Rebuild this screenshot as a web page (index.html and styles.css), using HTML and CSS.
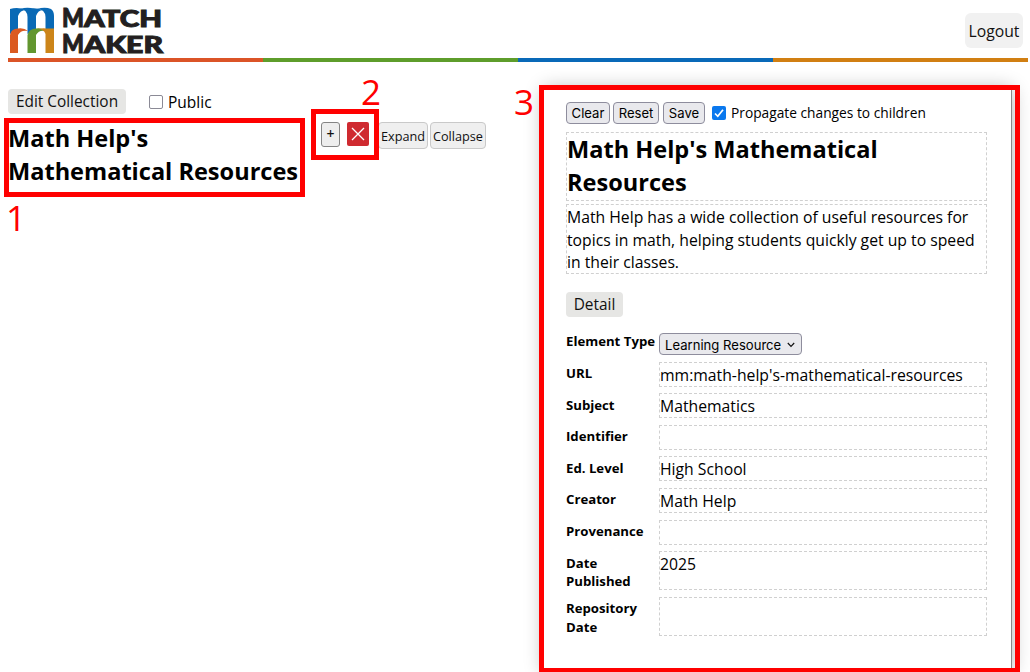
FILE: index.html
```html
<!DOCTYPE html>
<html lang="en">
<head>
<meta charset="utf-8">
<title>Match Maker</title>
<link rel="stylesheet" href="styles.css">
</head>
<body>
<header class="header">
  <div class="logo" role="img" aria-label="Match Maker">
    <svg width="54" height="50" viewBox="0 0 54 50">
      <g fill="#0969b5">
        <path d="M2 2Q10 -.5 18 3Q12 3 10 9V22L2 27Z"/>
        <path d="M12 2Q20 -.5 26 2Q28 4 28 9V22L19.500 27V10Q19 2 12 2Z"/>
        <path d="M20 2Q27 0 35 3Q30 3 28 9Q27 4 20 2Z"/>
        <path d="M29 2Q37 -.5 43 2Q46 4 46 9V22H37.500V10Q37 2 29 2Z"/>
      </g>
      <path fill="#db5a20" d="M2 46V28Q3 21.500 10 21.500Q16 20.500 20 24Q13 22.500 10 28V46Z"/>
      <path fill="#62962f" d="M19.500 46V28Q21 21.500 28 21.500Q34 20.500 37.500 24Q31 22.500 28 28V46Z"/>
      <path fill="#cc8519" d="M29 22Q35 21 38 21.500H46V46H37.500V27Q36 22 29 22Z"/>
    </svg>
    <svg class="logo-text" width="106" height="50" viewBox="0 0 106 50">
      <text class="logo-cap" x="0" y="20.300" textLength="22" lengthAdjust="spacingAndGlyphs">M</text>
      <text x="22" y="20.300" textLength="78" lengthAdjust="spacingAndGlyphs">ATCH</text>
      <text class="logo-cap" x="0" y="46" textLength="22" lengthAdjust="spacingAndGlyphs">M</text>
      <text x="22" y="46" textLength="79" lengthAdjust="spacingAndGlyphs">AKER</text>
    </svg>
  </div>
  <button class="logout">Logout</button>
</header>
<div class="rule"><i class="red"></i><i class="green"></i><i class="blue"></i><i class="ochre"></i></div>
<main class="main">
  <section class="tree">
    <div class="tree-bar">
      <button class="soft edit">Edit Collection</button>
      <span class="box"></span><span class="public">Public</span>
    </div>
    <div class="tree-row">
      <h1 class="title tree-title">Math Help's<br>Mathematical Resources</h1>
      <button class="plus">+</button>
      <button class="remove" aria-label="Remove"><svg width="14" height="14" viewBox="0 0 14 14"><path d="M1 1L13 13M13 1L1 13" stroke="#fff" stroke-width="1.300"/></svg></button>
      <button class="flat expand">Expand</button>
      <button class="flat collapse">Collapse</button>
    </div>
  </section>
  <section class="panel">
    <div class="panel-bar">
      <button class="native clear">Clear</button>
      <button class="native reset">Reset</button>
      <button class="native save">Save</button>
      <span class="box checked"><svg width="14" height="14" viewBox="0 0 14 14"><path d="M3 7.500L5.800 10.300L11 3.700" fill="none" stroke="#fff" stroke-width="1.700"/></svg></span>
      <span class="propagate">Propagate changes to children</span>
    </div>
    <h2 class="title field panel-title">Math Help's Mathematical<br>Resources</h2>
    <p class="field description">Math Help has a wide collection of useful resources for<br>topics in math, helping students quickly get up to speed<br>in their classes.</p>
    <button class="soft detail">Detail</button>
    <div class="form">
      <b>Element Type</b><div class="native select">Learning Resource<svg width="8" height="6" viewBox="0 0 8 6"><path d="M.8 1L4 4.300L7.200 1" fill="none" stroke="#111" stroke-width="1.200"/></svg></div>
      <b>URL</b><div class="field">mm:math-help's-mathematical-resources</div>
      <b>Subject</b><div class="field">Mathematics</div>
      <b>Identifier</b><div class="field"></div>
      <b>Ed. Level</b><div class="field">High School</div>
      <b>Creator</b><div class="field">Math Help</div>
      <b>Provenance</b><div class="field"></div>
      <b>Date<br>Published</b><div class="field">2025</div>
      <b>Repository<br>Date</b><div class="field"></div>
    </div>
  </section>
</main>
<div class="mark mark-1"></div><div class="num num-1">1</div>
<div class="mark mark-2"></div><div class="num num-2">2</div>
<div class="mark mark-3"></div><div class="num num-3">3</div>
</body>
</html>
```
FILE: styles.css
```css
* { box-sizing: border-box; }
body { margin: 0; width: 1030px; height: 672px; overflow: hidden; position: relative; background: #fff; color: #000; font: 15.740px/22.700px "Open Sans", "Noto Sans", sans-serif; }
button { font: inherit; color: #111; padding: 0; border: 0; margin: 0; white-space: nowrap; }
.header { display: flex; justify-content: space-between; height: 58px; padding: 7px 7px 0 8px; }
.logo { display: flex; }
.logo svg { display: block; overflow: visible; }
.logo-text { font: 900 22px Lato, sans-serif; fill: #231f20; stroke: #231f20; stroke-width: 1px; }
.logo-cap { font-size: 26px; }
.logout { width: 58px; height: 35px; margin-top: 6px; padding-top: 2px; border-radius: 6px; background: #f1f1f1; }
.rule { display: flex; height: 4px; margin: 0 2px 0 8px; }
.rule i { flex: 1; }
.red { background: #db5427; }
.green { background: #5e9d2b; }
.blue { background: #0969b8; }
.ochre { background: #d17f12; }
.main { display: flex; height: 610px; }
.tree { width: 544px; padding: 27px 0 0 8px; }
.tree-bar { display: flex; align-items: center; height: 25px; }
.soft { background: #e6e6e4; border-radius: 4px; height: 25px; padding-top: 1px; font-size: 15.400px; }
.edit { width: 118px; margin-right: 23px; }
.box { width: 14px; height: 14px; border: 1px solid #8b8a96; border-radius: 2px; background: #fff; flex: none; }
.public { margin-left: 5px; padding-top: 2px; font-size: 15.500px; }
.tree-row { display: flex; align-items: flex-start; margin-top: 8px; }
.title { margin: 0; font-size: 23.550px; line-height: 33.300px; font-weight: 700; white-space: nowrap; }
.tree-title { width: 313px; }
.plus { width: 19px; height: 25px; border: 1px solid #858585; border-radius: 3px; background: #eee; font-size: 14px; font-weight: 600; }
.remove { width: 22px; height: 24px; margin-left: 7px; border-radius: 2px; background: #cf2a30; display: grid; place-items: center; }
.flat { height: 27px; padding-top: 1px; border: 1px solid #c9c9c9; border-radius: 4px; background: #efefef; font-size: 12.700px; }
.expand { width: 50px; margin-left: 9px; }
.collapse { width: 56px; margin-left: 2px; }
.panel { width: 468px; margin-top: 27px; padding: 13px 24px 0 22px; border-right: 1px solid #888; box-shadow: 0 0 18px rgba(0,0,0,.32); background: #fff; }
.panel-bar { display: flex; align-items: center; height: 22px; margin-bottom: 8px; }
.native { font-family: Inter, "Liberation Sans", sans-serif; font-size: 13.100px; line-height: 20px; height: 22px; border: 1px solid #8e8d9d; border-radius: 4px; background: #e9e9ed; color: #000; }
.clear { width: 44px; }
.reset { width: 46px; margin-left: 3px; }
.save { width: 42px; margin-left: 4px; }
.checked { margin-left: 7px; border: 0; background: #0a78ee; }
.checked svg { display: block; }
.propagate { margin-left: 5px; padding-top: 1px; font-size: 13.750px; white-space: nowrap; }
.field { border: 1px dashed #d0d0d0; white-space: nowrap; }
.panel-title { height: 69px; }
.description { height: 70px; margin: 3px 0 18px; padding-top: 1px; }
.detail { display: block; width: 57px; }
.form { display: grid; grid-template-columns: 93px 1fr; grid-template-rows: 22px repeat(6, 25px) 39px 39px; row-gap: 6.600px; margin-top: 16px; }
.form .field { padding-top: 1px; }
.form b { font-size: 13.200px; line-height: 18.600px; padding-top: 2.500px; white-space: nowrap; }
.form b:first-child { margin-top: -1px; padding-top: 0; }
.select { width: 143px; padding: 1px 6px 0 5px; display: flex; align-items: center; justify-content: space-between; }
.mark { position: absolute; border: 5px solid #f00; }
.mark-1 { left: 4px; top: 118px; width: 301px; height: 79px; }
.mark-2 { left: 311px; top: 109px; width: 68px; height: 51px; }
.mark-3 { left: 539px; top: 85px; width: 481px; height: 587px; border-bottom-width: 4px; }
.num { position: absolute; color: #f00; font-size: 35px; line-height: 40px; }
.num-1 { left: 6px; top: 198px; }
.num-2 { left: 361px; top: 72px; }
.num-3 { left: 514px; top: 82px; }
```
